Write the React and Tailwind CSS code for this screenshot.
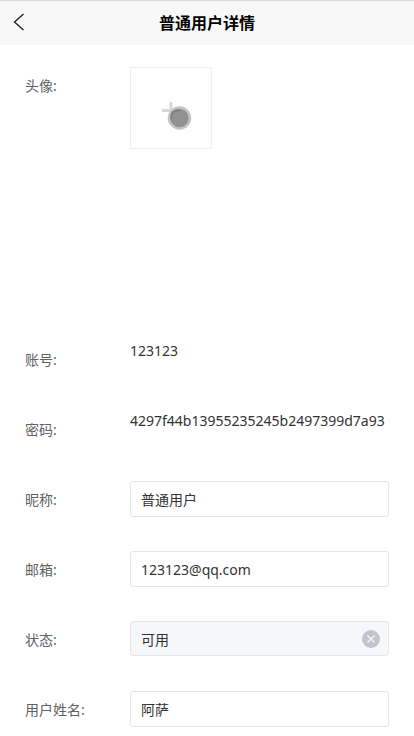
import { useState } from "react";

function Row({ label, htmlFor, tall, children }) {
  return (
    <div className={tall ? "flex min-h-[242px]" : "flex min-h-[38px]"}>
      <label htmlFor={htmlFor} className="w-[105px] shrink-0 text-sm leading-[38px] text-[#606266]">
        {label}:
      </label>
      <div className="min-w-0 flex-1">{children}</div>
    </div>
  );
}

function TextField({ id, value, onChange }) {
  return (
    <input
      id={id}
      value={value}
      onChange={onChange}
      className="block h-9 w-full rounded-[3px] border border-[#e6e6e6] bg-white px-2.5 text-sm text-[#333] outline-none"
    />
  );
}

export default function App() {
  const [form, setForm] = useState({
    nickname: "普通用户",
    email: "123123@qq.com",
    status: "可用",
    name: "阿萨",
  });

  const update = (key) => (e) => setForm({ ...form, [key]: e.target.value });

  return (
    <div className="bg-white font-['Noto_Sans','Noto_Sans_CJK_SC',sans-serif] text-[#333]">
      {/* header */}
      <header className="grid h-[45px] grid-cols-[45px_1fr_45px] items-center border-t border-[#d8d8d8] bg-[#f8f8f8]">
        <button type="button" aria-label="返回" className="flex h-full items-center pl-3">
          <svg width="14" height="20" viewBox="0 0 14 20" fill="none" stroke="#222" strokeWidth="1.4">
            <path d="M11.5 1 2.5 9 11.5 17" />
          </svg>
        </button>
        <h1 className="text-center text-base font-bold text-black">普通用户详情</h1>
      </header>

      {/* form */}
      <form className="flex flex-col gap-8 px-[25px] pt-[22px] pb-2">
        <Row label="头像" htmlFor="avatar" tall>
          <button
            id="avatar"
            type="button"
            aria-label="头像"
            className="flex size-[82px] items-center justify-center border border-[#eeeeee]"
          >
            <svg width="80" height="80" viewBox="0 0 80 80">
              <path d="M31 42.5h18M40 34v14" stroke="#d9d9d9" strokeWidth="3" fill="none" />
              <circle cx="48.5" cy="50" r="10.5" fill="#929292" stroke="#c4c4c4" strokeWidth="2.5" />
              <path d="M40.5 51v-4q1-4 5-4.5h4" stroke="#7d7d7d" strokeWidth="2" fill="none" />
            </svg>
          </button>
        </Row>

        <Row label="账号">
          <p className="text-sm leading-5">123123</p>
        </Row>

        <Row label="密码">
          <p className="text-sm leading-5">4297f44b13955235245b2497399d7a93</p>
        </Row>

        <Row label="昵称" htmlFor="nickname">
          <TextField id="nickname" value={form.nickname} onChange={update("nickname")} />
        </Row>

        <Row label="邮箱" htmlFor="email">
          <TextField id="email" value={form.email} onChange={update("email")} />
        </Row>

        <Row label="状态" htmlFor="status">
          <div className="flex h-[35px] items-center rounded-[3px] border border-[#e6e6e6] bg-[#f5f7fa] pr-2 pl-2.5">
            <input
              id="status"
              value={form.status}
              readOnly
              className="h-full min-w-0 flex-1 bg-transparent text-sm text-[#333] outline-none"
            />
            <button type="button" aria-label="清除" onClick={() => setForm({ ...form, status: "" })}>
              <svg width="18" height="18" viewBox="0 0 18 18">
                <circle cx="9" cy="9" r="9" fill="#c0c4cc" />
                <path d="M5.5 5.5l7 7M12.5 5.5l-7 7" stroke="#f5f7fa" strokeWidth="1.4" />
              </svg>
            </button>
          </div>
        </Row>

        <Row label="用户姓名" htmlFor="name">
          <TextField id="name" value={form.name} onChange={update("name")} />
        </Row>
      </form>
    </div>
  );
}
